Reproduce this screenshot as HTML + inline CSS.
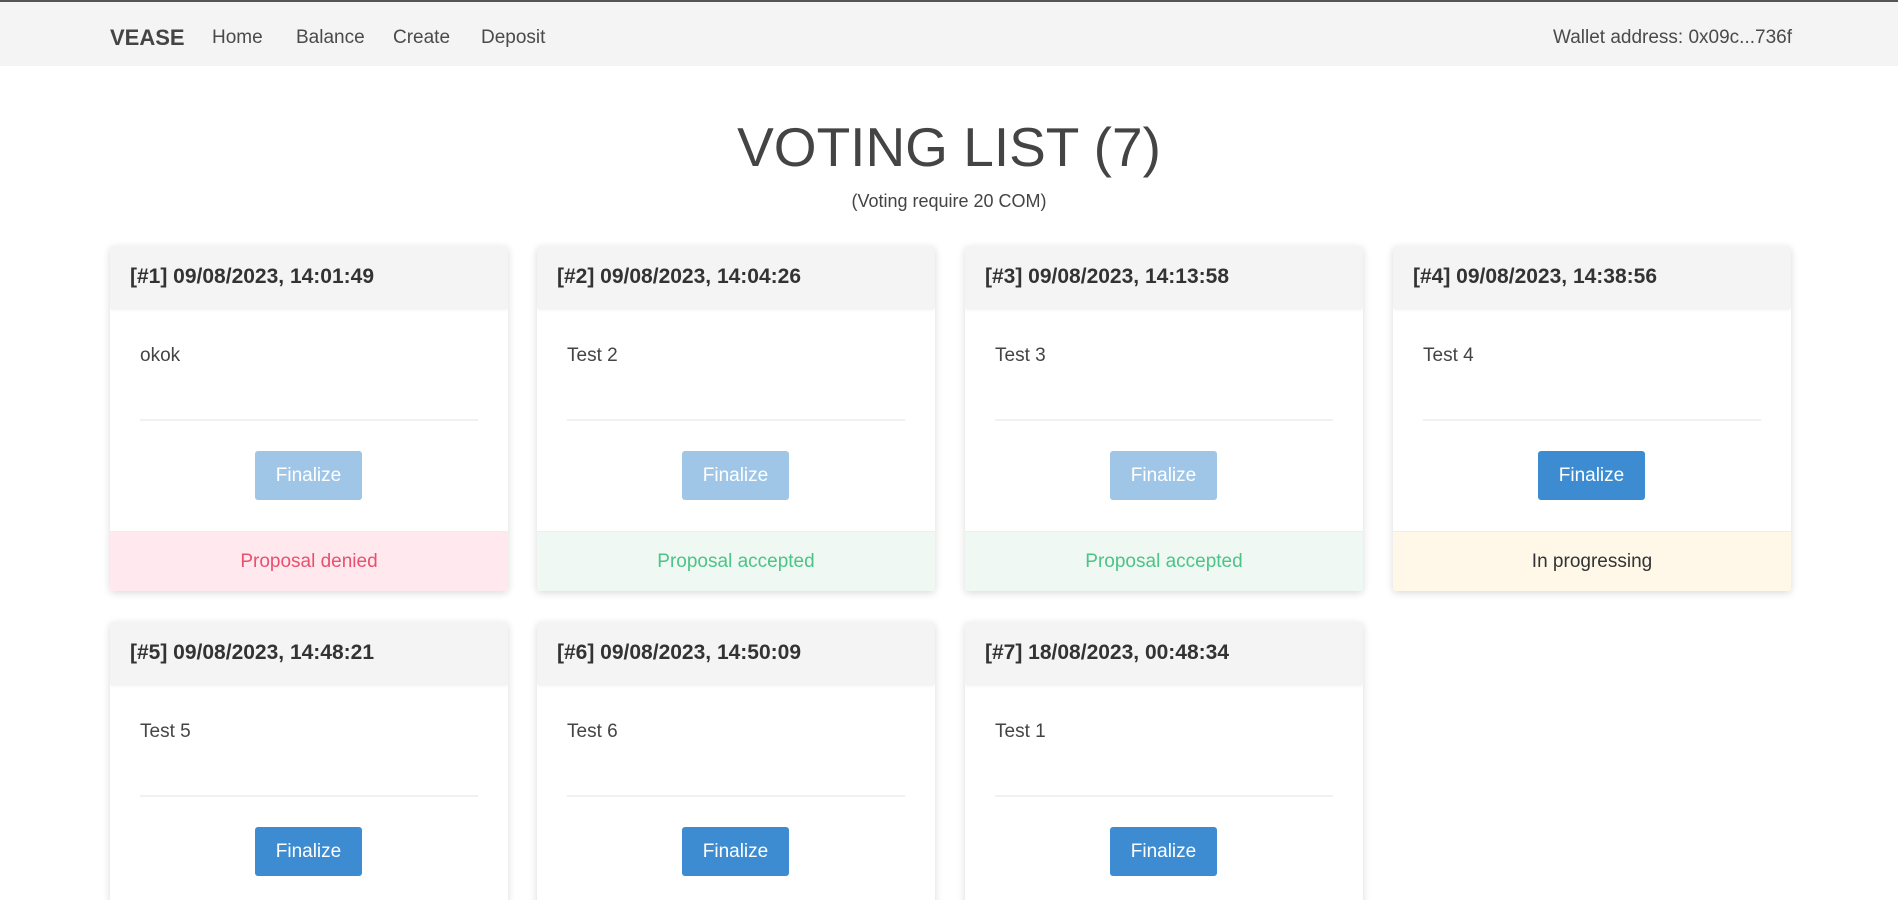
<!DOCTYPE html>
<html><head><meta charset="utf-8"><style>
*{box-sizing:border-box;margin:0;padding:0}
html,body{width:1898px;height:900px;overflow:hidden}
body{background:#fff;font-family:"Segoe UI","Liberation Sans",sans-serif;color:#444;position:relative}
.nav{height:66px;background:#f4f4f4;border-top:2px solid #555;position:relative}
.nav span{position:absolute;top:0;line-height:72px;font-size:19px;color:#4a4a4a}
.brand{font-weight:bold;font-size:22px!important;color:#444!important}
h1{position:absolute;top:112px;left:0;width:1898px;text-align:center;font-weight:normal;font-size:55px;color:#444;line-height:70px}
.sub{position:absolute;top:191px;left:0;width:1898px;text-align:center;font-size:18px;color:#444}
.card{position:absolute;width:398px;background:#fff;box-shadow:0 2px 8px rgba(0,0,0,.15);border-radius:3px;overflow:hidden}
.hd{height:62px;background:#f4f4f4;line-height:62px;padding-left:20px;font-weight:bold;font-size:21px;color:#333;box-shadow:0 2px 3px rgba(0,0,0,.06);position:relative}
.bd{height:223px;position:relative}
.bd .t{position:absolute;left:30px;top:37px;font-size:19px;color:#444}
.bd .hr{position:absolute;left:30px;right:30px;top:111px;height:2px;background:#f1f1f1}
.btn{position:absolute;left:145px;top:143px;width:107px;height:49px;border-radius:3px;background:#3d8bd0;color:#fff;font-size:19px;text-align:center;line-height:49px}
.btn.dis{background:#a0c6e7}
.ft{height:60px;line-height:60px;text-align:center;font-size:19px;border-top:1px solid #eee}
.den{background:#ffe9ee;color:#e8506e}.acc{background:#eff8f3;color:#4cc486}.prog{background:#fff8e9;color:#333}
</style></head><body>
<div class="nav">
<span class="brand" style="left:110px">VEASE</span>
<span style="left:212px">Home</span>
<span style="left:296px">Balance</span>
<span style="left:393px">Create</span>
<span style="left:481px">Deposit</span>
<span style="right:106px">Wallet address: 0x09c...736f</span>
</div>
<h1>VOTING LIST (7)</h1>
<div class="sub">(Voting require 20 COM)</div>

<div class="card" style="left:110px;top:246px"><div class="hd">[#1] 09/08/2023, 14:01:49</div><div class="bd"><div class="t">okok</div><div class="hr"></div><div class="btn dis">Finalize</div></div><div class="ft den">Proposal denied</div></div>
<div class="card" style="left:537px;top:246px"><div class="hd">[#2] 09/08/2023, 14:04:26</div><div class="bd"><div class="t">Test 2</div><div class="hr"></div><div class="btn dis">Finalize</div></div><div class="ft acc">Proposal accepted</div></div>
<div class="card" style="left:965px;top:246px"><div class="hd">[#3] 09/08/2023, 14:13:58</div><div class="bd"><div class="t">Test 3</div><div class="hr"></div><div class="btn dis">Finalize</div></div><div class="ft acc">Proposal accepted</div></div>
<div class="card" style="left:1393px;top:246px"><div class="hd">[#4] 09/08/2023, 14:38:56</div><div class="bd"><div class="t">Test 4</div><div class="hr"></div><div class="btn">Finalize</div></div><div class="ft prog">In progressing</div></div>

<div class="card" style="left:110px;top:622px"><div class="hd">[#5] 09/08/2023, 14:48:21</div><div class="bd"><div class="t">Test 5</div><div class="hr"></div><div class="btn">Finalize</div></div></div>
<div class="card" style="left:537px;top:622px"><div class="hd">[#6] 09/08/2023, 14:50:09</div><div class="bd"><div class="t">Test 6</div><div class="hr"></div><div class="btn">Finalize</div></div></div>
<div class="card" style="left:965px;top:622px"><div class="hd">[#7] 18/08/2023, 00:48:34</div><div class="bd"><div class="t">Test 1</div><div class="hr"></div><div class="btn">Finalize</div></div></div>
</body></html>
